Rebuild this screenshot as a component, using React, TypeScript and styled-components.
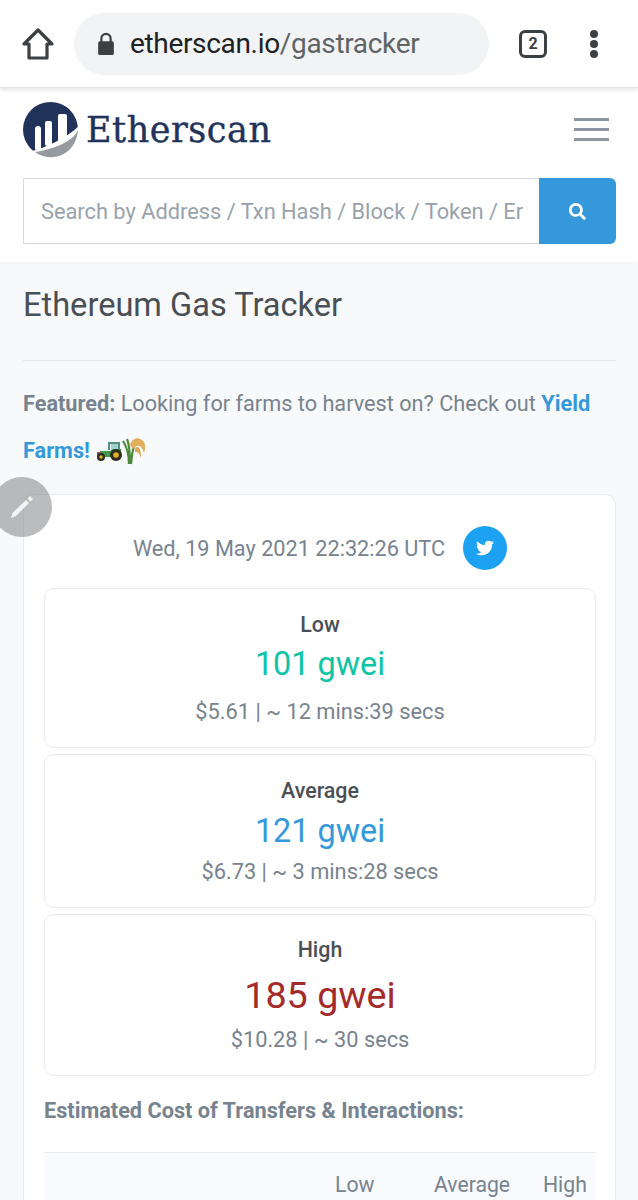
import styled, { createGlobalStyle } from "styled-components";
import { FaTwitter, FaSearch } from "react-icons/fa";

const Global = createGlobalStyle`
  html, body {
    margin: 0;
    padding: 0;
    background: #f8f9fa;
    font-family: Roboto, "Liberation Sans", sans-serif;
  }
  * { box-sizing: border-box; }
`;

const Page = styled.div`
  position: relative;
  width: 638px;
  height: 1200px;
  overflow: hidden;
  background: #f8f9fa;
`;

const ChromeBar = styled.div`
  height: 88px;
  display: flex;
  align-items: center;
  padding: 0 0 0 20px;
  background: #fff;
  border-bottom: 1px solid #e3e3e3;
  box-shadow: 0 2px 4px rgba(0, 0, 0, 0.1);
  position: relative;
  z-index: 2;
`;

const UrlPill = styled.div`
  width: 415px;
  height: 62px;
  margin-left: 18px;
  border-radius: 31px;
  background: #f1f3f4;
  display: flex;
  align-items: center;
  padding-left: 23px;
  gap: 15px;
  font-size: 28px;
  letter-spacing: -0.33px;
  color: #5f6368;
`;

const Host = styled.span`
  color: #202124;
`;

const TabCount = styled.div`
  width: 28px;
  height: 28px;
  margin-left: 30px;
  border: 3px solid #3c4043;
  border-radius: 6px;
  display: flex;
  align-items: center;
  justify-content: center;
  font-size: 16px;
  font-weight: 700;
  color: #3c4043;
`;

const MenuDots = styled.div`
  margin-left: 43px;
  display: flex;
  flex-direction: column;
  gap: 2px;
  span {
    width: 8px;
    height: 8px;
    border-radius: 50%;
    background: #3c4043;
  }
`;

const Header = styled.header`
  height: 174px;
  background: #fff;
  padding: 13px 22px 0 23px;
  box-shadow: 0 1px 3px rgba(0, 0, 0, 0.04);
`;

const HeaderTop = styled.div`
  display: flex;
  align-items: center;
  justify-content: space-between;
  height: 57px;
`;

const Brand = styled.div`
  display: flex;
  align-items: center;
  gap: 7px;
`;

const BrandName = styled.span`
  font-family: "DejaVu Serif", "Liberation Serif", serif;
  font-size: 35px;
  line-height: 40px;
  color: #21325b;
  letter-spacing: 0.55px;
  -webkit-text-stroke: 0.4px #21325b;
`;

const Burger = styled.div`
  width: 35px;
  margin-right: 7px;
  display: flex;
  flex-direction: column;
  gap: 7px;
  span {
    height: 3px;
    background: #8d97a3;
  }
`;

const SearchRow = styled.div`
  display: flex;
  height: 66px;
  margin-top: 20px;
  width: 593px;
`;

const SearchField = styled.div`
  flex: 1;
  border: 1px solid #d5dae2;
  border-right: 0;
  background: #fff;
  padding: 0 16px 0 17px;
  display: flex;
  align-items: center;
  font-size: 21.8px;
  color: #98a2ac;
  white-space: nowrap;
  overflow: hidden;
`;

const SearchButton = styled.div`
  width: 77px;
  background: #3498db;
  border-radius: 0 6px 6px 0;
  color: #fff;
  display: flex;
  align-items: center;
  justify-content: center;
  font-size: 17px;
`;

const Main = styled.main`
  padding: 0 22px 0 23px;
`;

const Title = styled.h1`
  margin: 0;
  height: 99px;
  padding-top: 22px;
  font-size: 32.6px;
  line-height: 42px;
  font-weight: 400;
  color: #4a4f55;
  border-bottom: 1px solid #e3e6ea;
`;

const Featured = styled.p`
  margin: 19px 0 20px;
  font-size: 21.7px;
  line-height: 47px;
  color: #77838f;
  b {
    font-weight: 700;
  }
`;

const YieldLink = styled.b`
  color: #3498db;
`;

const FarmIcons = styled.svg`
  width: 50px;
  height: 28px;
  vertical-align: -7px;
  margin-left: 6px;
`;

const Card = styled.section`
  background: #fff;
  border: 1px solid #e7eaf3;
  border-bottom: 0;
  border-radius: 10px 10px 0 0;
  padding: 0 19px 0 20px;
  height: 720px;
`;

const DateRow = styled.div`
  height: 93px;
  padding-top: 13px;
  display: flex;
  align-items: center;
  justify-content: center;
  gap: 18px;
  font-size: 21.7px;
  color: #77838f;
`;

const TweetCircle = styled.div`
  width: 44px;
  height: 44px;
  border-radius: 50%;
  background: #1da1f2;
  color: #fff;
  display: flex;
  align-items: center;
  justify-content: center;
  font-size: 18px;
`;

const GasBox = styled.div<{ $height: number; $top: number }>`
  height: ${(p) => p.$height}px;
  margin-bottom: 6px;
  border: 1px solid #e7eaf3;
  border-radius: 10px;
  display: flex;
  flex-direction: column;
  align-items: center;
  padding-top: ${(p) => p.$top}px;
`;

const GasLabel = styled.div`
  font-size: 21.4px;
  line-height: 28px;
  font-weight: 500;
  color: #4a4f55;
`;

const GasPrice = styled.div<{ $color: string; $size: number; $gap: number }>`
  margin-top: ${(p) => p.$gap}px;
  font-size: ${(p) => p.$size}px;
  line-height: 44px;
  color: ${(p) => p.$color};
`;

const GasCost = styled.div<{ $gap: number }>`
  margin-top: ${(p) => p.$gap}px;
  font-size: 21.8px;
  line-height: 30px;
  color: #77838f;
`;

const CostHeading = styled.div`
  margin-top: 21px;
  font-size: 21.7px;
  line-height: 28px;
  font-weight: 700;
  color: #77838f;
`;

const TableHead = styled.div`
  margin-top: 27px;
  height: 70px;
  border-top: 1px solid #e7eaf3;
  background: #f8fafd;
  display: grid;
  grid-template-columns: 291px 41px 58px 77px 32px 44px;
  padding-top: 17px;
  font-size: 21.2px;
  line-height: 30px;
  color: #77838f;
  white-space: nowrap;
`;

const PencilButton = styled.div`
  position: absolute;
  left: -8px;
  top: 477px;
  width: 60px;
  height: 60px;
  border-radius: 50%;
  background: rgba(120, 122, 125, 0.5);
  display: flex;
  align-items: center;
  justify-content: center;
`;

const gasRows = [
  { label: "Low", price: "101 gwei", color: "#0fc4a5", size: 32.4, cost: "$5.61 | ~ 12 mins:39 secs", height: 160, top: 22, priceGap: 3, costGap: 11 },
  { label: "Average", price: "121 gwei", color: "#3498db", size: 32.4, cost: "$6.73 | ~ 3 mins:28 secs", height: 154, top: 22, priceGap: 4, costGap: 4 },
  { label: "High", price: "185 gwei", color: "#a52a2a", size: 37.7, cost: "$10.28 | ~ 30 secs", height: 162, top: 21, priceGap: 9, costGap: 8 },
];

function App() {
  return (
    <Page>
      <Global />
      <ChromeBar>
        <svg width="36" height="34" viewBox="0 0 36 34" fill="none" stroke="#3c4043" strokeWidth="3.2" strokeLinejoin="round">
          <path d="M18 3 L32 17 H27 V31 H9 V17 H4 Z" />
        </svg>
        <UrlPill>
          <svg width="18" height="24" viewBox="0 0 18 26">
            <path d="M4 11 V7 a5 5 0 0 1 10 0 V11" fill="none" stroke="#3c4043" strokeWidth="2.4" />
            <rect x="0.5" y="10" width="17" height="15" rx="2" fill="#3c4043" />
          </svg>
          <span>
            <Host>etherscan.io</Host>/gastracker
          </span>
        </UrlPill>
        <TabCount>2</TabCount>
        <MenuDots>
          <span />
          <span />
          <span />
        </MenuDots>
      </ChromeBar>

      <Header>
        <HeaderTop>
          <Brand>
            <svg width="56" height="56" viewBox="0 0 56 56">
              <circle cx="27.500" cy="27.500" r="27.500" fill="#21325b" />
              <path d="M0 52 L6 50 C24 45 42 37 56 24 V56 H0 Z" fill="#fff" />
              <rect x="12" y="24" width="6" height="25" rx="3" fill="#fff" />
              <rect x="22" y="19" width="7" height="25" rx="2" fill="#fff" />
              <rect x="35" y="12" width="9" height="28" rx="2" fill="#fff" />
              <path d="M55 28 C50 40 30 47 12 50 C20 56 30 56 36 54 C48 50 54 40 55 28 Z" fill="#979a9e" />
            </svg>
            <BrandName>Etherscan</BrandName>
          </Brand>
          <Burger>
            <span />
            <span />
            <span />
          </Burger>
        </HeaderTop>
        <SearchRow>
          <SearchField>Search by Address / Txn Hash / Block / Token / Er</SearchField>
          <SearchButton>
            <FaSearch />
          </SearchButton>
        </SearchRow>
      </Header>

      <Main>
        <Title>Ethereum Gas Tracker</Title>
        <Featured>
          <b>Featured:</b> Looking for farms to harvest on? Check out <YieldLink>Yield Farms!</YieldLink>
          <FarmIcons viewBox="0 0 50 28">
            <path d="M13 13 V6 H23 V15" fill="none" stroke="#4f8f86" strokeWidth="2" />
            <rect x="15" y="7" width="7" height="7" fill="#9fd0cc" />
            <path d="M4 14 H14 L17 12 H25 V20 H4 Z" fill="#3f9a48" />
            <rect x="1" y="15" width="5" height="5" fill="#8a5a66" />
            <circle cx="5" cy="20" r="4" fill="#2c2c20" />
            <circle cx="5" cy="20" r="1.800" fill="#e0b020" />
            <circle cx="20" cy="18" r="6" fill="#2c2c20" />
            <circle cx="20" cy="18" r="2.800" fill="#e0b020" />
            <path d="M33 27 C33 18 31 10 27 4 M34 27 C34 18 34 9 31 2 M35 27 C36 20 36 12 39 7" fill="none" stroke="#4d8a3c" strokeWidth="2.200" />
            <path d="M34 8 C36 0 44 -1 48 5 C50 9 49 13 48 16 C46 9 42 6 37 12 Z" fill="#e3ae5c" />
            <path d="M39 11 C43 8 45 12 45 21 C43 16 41 14 39 15 Z" fill="#dfa552" />
          </FarmIcons>
        </Featured>
        <Card>
          <DateRow>
            Wed, 19 May 2021 22:32:26 UTC
            <TweetCircle>
              <FaTwitter />
            </TweetCircle>
          </DateRow>
          {gasRows.map((row) => (
            <GasBox key={row.label} $height={row.height} $top={row.top}>
              <GasLabel>{row.label}</GasLabel>
              <GasPrice $color={row.color} $size={row.size} $gap={row.priceGap}>
                {row.price}
              </GasPrice>
              <GasCost $gap={row.costGap}>{row.cost}</GasCost>
            </GasBox>
          ))}
          <CostHeading>Estimated Cost of Transfers &amp; Interactions:</CostHeading>
          <TableHead>
            <span />
            <span>Low</span>
            <span />
            <span>Average</span>
            <span />
            <span>High</span>
          </TableHead>
        </Card>
      </Main>

      <PencilButton>
        <svg width="30" height="30" viewBox="0 0 30 30">
          <path d="M4 26 L5.500 21 L19 8 L22 11 L9 24 Z M20.500 6.500 L23 4 L26 7 L23.500 9.500 Z" fill="#f4f4f4" />
        </svg>
      </PencilButton>
    </Page>
  );
}

export default App;
